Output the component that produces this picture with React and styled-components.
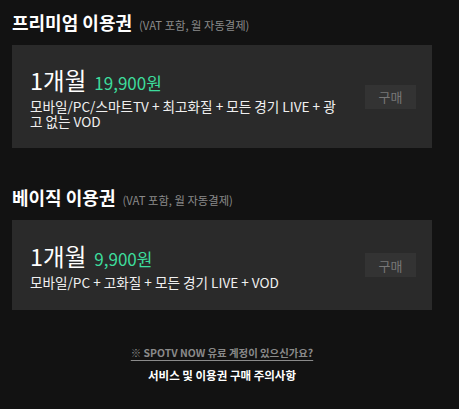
import React from 'react';
import styled, { createGlobalStyle } from 'styled-components';

const GlobalStyle = createGlobalStyle`
  html, body {
    margin: 0;
    padding: 0;
    background: #121212;
    font-family: "Noto Sans CJK KR", "Noto Sans", sans-serif;
    color: #fff;
  }
`;

const Page = styled.div`
  width: 420px;
  padding: 8px 0 0 12px;
`;

const Section = styled.section`
  margin-bottom: 35px;
`;

const TitleRow = styled.h2`
  margin: 0 0 6px;
  display: flex;
  align-items: baseline;
  gap: 7px;
  font-size: 18px;
  font-weight: 700;
  line-height: 28px;
  color: #fff;
`;

const TitleNote = styled.span`
  font-size: 11.3px;
  font-weight: 400;
  color: #8a8a8a;
`;

const Card = styled.div`
  display: flex;
  align-items: center;
  justify-content: space-between;
  background: #2a2a2a;
  padding: ${p => (p.$single ? '20px 16px 20px 18px' : '19px 16px 19px 18px')};
`;

const Info = styled.div`
  width: 310px;
`;

const PriceRow = styled.div`
  display: flex;
  align-items: baseline;
  gap: 8px;
  margin-bottom: 2px;
`;

const Period = styled.span`
  font-size: 23.5px;
  line-height: 33px;
  font-weight: 400;
`;

const Price = styled.span`
  font-size: 17px;
  color: #3ddc9c;
`;

const Desc = styled.p`
  margin: 0;
  font-size: 13.6px;
  line-height: 15px;
  color: #f0f0f0;
`;

const BuyButton = styled.button`
  width: 51px;
  height: 24px;
  border: 0;
  background: #333;
  color: #777;
  font-family: inherit;
  font-size: 13px;
  padding: 0;
`;

const Footer = styled.div`
  display: flex;
  flex-direction: column;
  align-items: center;
  gap: 8px;
  margin-top: 7px;
`;

const FooterLink = styled.a`
  font-size: ${p => (p.$muted ? '10.4px' : '11.5px')};
  font-weight: 700;
  color: ${p => (p.$muted ? '#8a8a8a' : '#fff')};
  text-decoration: underline;
  text-underline-offset: 3px;
  line-height: 15px;
`;

const plans = [
  {
    title: '프리미엄 이용권',
    price: '19,900원',
    desc: '모바일/PC/스마트TV + 최고화질 + 모든 경기 LIVE + 광고 없는 VOD',
  },
  {
    title: '베이직 이용권',
    price: '9,900원',
    desc: '모바일/PC + 고화질 + 모든 경기 LIVE + VOD',
    single: true,
  },
];

export default function App() {
  return (
    <>
      <GlobalStyle />
      <Page>
        {plans.map(plan => (
          <Section key={plan.title}>
            <TitleRow>
              {plan.title}
              <TitleNote>(VAT 포함, 월 자동결제)</TitleNote>
            </TitleRow>
            <Card $single={plan.single}>
              <Info>
                <PriceRow>
                  <Period>1개월</Period>
                  <Price>{plan.price}</Price>
                </PriceRow>
                <Desc>{plan.desc}</Desc>
              </Info>
              <BuyButton>구매</BuyButton>
            </Card>
          </Section>
        ))}
        <Footer>
          <FooterLink $muted>※ SPOTV NOW 유료 계정이 있으신가요?</FooterLink>
          <FooterLink>서비스 및 이용권 구매 주의사항</FooterLink>
        </Footer>
      </Page>
    </>
  );
}
